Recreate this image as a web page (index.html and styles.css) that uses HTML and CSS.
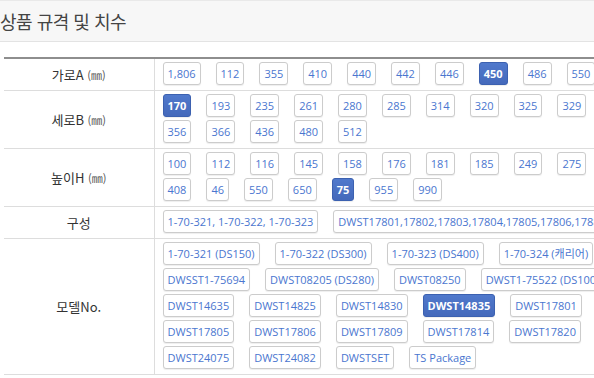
FILE: index.html
```html
<!DOCTYPE html>
<html lang="ko">
<head>
    <meta charset="UTF-8">
    <meta name="viewport" content="width=device-width, initial-scale=1.0">
    <title>상품 규격 및 치수</title>
    <link rel="stylesheet" href="styles.css">
</head>
<body>
    <div class="page-title">
        <h2>상품 규격 및 치수</h2>
    </div>

    <table class="spec-table">
        <colgroup>
            <col class="col-label">
            <col>
        </colgroup>
        <tr>
            <th>가로A <span class="unit">(㎜)</span></th>
            <td>
                <div class="opt-line">
                    <a class="opt">1,806</a>
                    <a class="opt">112</a>
                    <a class="opt">355</a>
                    <a class="opt">410</a>
                    <a class="opt">440</a>
                    <a class="opt">442</a>
                    <a class="opt">446</a>
                    <a class="opt active">450</a>
                    <a class="opt">486</a>
                    <a class="opt">550</a>
                </div>
            </td>
        </tr>
        <tr>
            <th>세로B <span class="unit">(㎜)</span></th>
            <td>
                <div class="opt-line">
                    <a class="opt active">170</a>
                    <a class="opt">193</a>
                    <a class="opt">235</a>
                    <a class="opt">261</a>
                    <a class="opt">280</a>
                    <a class="opt">285</a>
                    <a class="opt">314</a>
                    <a class="opt">320</a>
                    <a class="opt">325</a>
                    <a class="opt">329</a>
                </div>
                <div class="opt-line">
                    <a class="opt">356</a>
                    <a class="opt">366</a>
                    <a class="opt">436</a>
                    <a class="opt">480</a>
                    <a class="opt">512</a>
                </div>
            </td>
        </tr>
        <tr>
            <th>높이H <span class="unit">(㎜)</span></th>
            <td>
                <div class="opt-line">
                    <a class="opt">100</a>
                    <a class="opt">112</a>
                    <a class="opt">116</a>
                    <a class="opt">145</a>
                    <a class="opt">158</a>
                    <a class="opt">176</a>
                    <a class="opt">181</a>
                    <a class="opt">185</a>
                    <a class="opt">249</a>
                    <a class="opt">275</a>
                </div>
                <div class="opt-line">
                    <a class="opt">408</a>
                    <a class="opt">46</a>
                    <a class="opt">550</a>
                    <a class="opt">650</a>
                    <a class="opt active">75</a>
                    <a class="opt">955</a>
                    <a class="opt">990</a>
                </div>
            </td>
        </tr>
        <tr>
            <th>구성</th>
            <td>
                <div class="opt-line">
                    <a class="opt">1-70-321, 1-70-322, 1-70-323</a>
                    <a class="opt">DWST17801,17802,17803,17804,17805,17806,17881</a>
                </div>
            </td>
        </tr>
        <tr>
            <th>모델No.</th>
            <td>
                <div class="opt-line">
                    <a class="opt">1-70-321 (DS150)</a>
                    <a class="opt">1-70-322 (DS300)</a>
                    <a class="opt">1-70-323 (DS400)</a>
                    <a class="opt">1-70-324 (캐리어)</a>
                </div>
                <div class="opt-line">
                    <a class="opt">DWSST1-75694</a>
                    <a class="opt">DWST08205 (DS280)</a>
                    <a class="opt">DWST08250</a>
                    <a class="opt">DWST1-75522 (DS100)</a>
                </div>
                <div class="opt-line">
                    <a class="opt">DWST14635</a>
                    <a class="opt">DWST14825</a>
                    <a class="opt">DWST14830</a>
                    <a class="opt active">DWST14835</a>
                    <a class="opt">DWST17801</a>
                    <a class="opt">DWST17802</a>
                </div>
                <div class="opt-line">
                    <a class="opt">DWST17805</a>
                    <a class="opt">DWST17806</a>
                    <a class="opt">DWST17809</a>
                    <a class="opt">DWST17814</a>
                    <a class="opt">DWST17820</a>
                    <a class="opt">DWST17821</a>
                </div>
                <div class="opt-line">
                    <a class="opt">DWST24075</a>
                    <a class="opt">DWST24082</a>
                    <a class="opt">DWSTSET</a>
                    <a class="opt">TS Package</a>
                </div>
            </td>
        </tr>
    </table>
</body>
</html>
```

FILE: styles.css
```css
body {
    margin: 0;
    font-family: "Noto Sans CJK KR", "Open Sans", sans-serif;
    color: #333333;
    background-color: #ffffff;
    overflow: hidden;
}
.page-title {
    background-color: #f7f7f7;
    border-top: 1px solid #e9e9e9;
    border-bottom: 1px solid #e3e3e3;
    height: 40px;
    margin-bottom: 15px;
}
.page-title h2 {
    margin: 0;
    font-size: 18px;
    font-weight: normal;
    line-height: 40px;
    color: #444444;
    letter-spacing: -0.5px;
}
.spec-table {
    border-collapse: collapse;
    table-layout: fixed;
    margin-left: 4px;
    width: 720px;
    border-top: 2px solid #8e8e8e;
}
.col-label {
    width: 150px;
}
.spec-table th {
    font-size: 13px;
    font-weight: normal;
    color: #333333;
    text-align: center;
    border-right: 1px solid #dddddd;
    border-bottom: 1px solid #dddddd;
    padding: 0;
}
.spec-table th .unit {
    font-size: 11px;
    color: #555555;
}
.spec-table td {
    padding: 3px 8px 2px 8px;
    border-bottom: 1px solid #dddddd;
    vertical-align: top;
}
.opt-line {
    display: flex;
    gap: 15px;
    white-space: nowrap;
}
.opt {
    display: inline-block;
    height: 21px;
    line-height: 21px;
    padding: 0 4px;
    margin-bottom: 3px;
    font-family: "Open Sans", "Noto Sans CJK KR", sans-serif;
    font-size: 11px;
    color: #4a76cf;
    background-color: #ffffff;
    border: 1px solid #cccccc;
    border-radius: 3px;
    box-shadow: 0 1px 1px rgba(0, 0, 0, 0.07);
    cursor: pointer;
}
.opt.active {
    color: #ffffff;
    font-weight: bold;
    background: linear-gradient(#5079cc, #4469bb);
    border-color: #3c61b0;
}
```
